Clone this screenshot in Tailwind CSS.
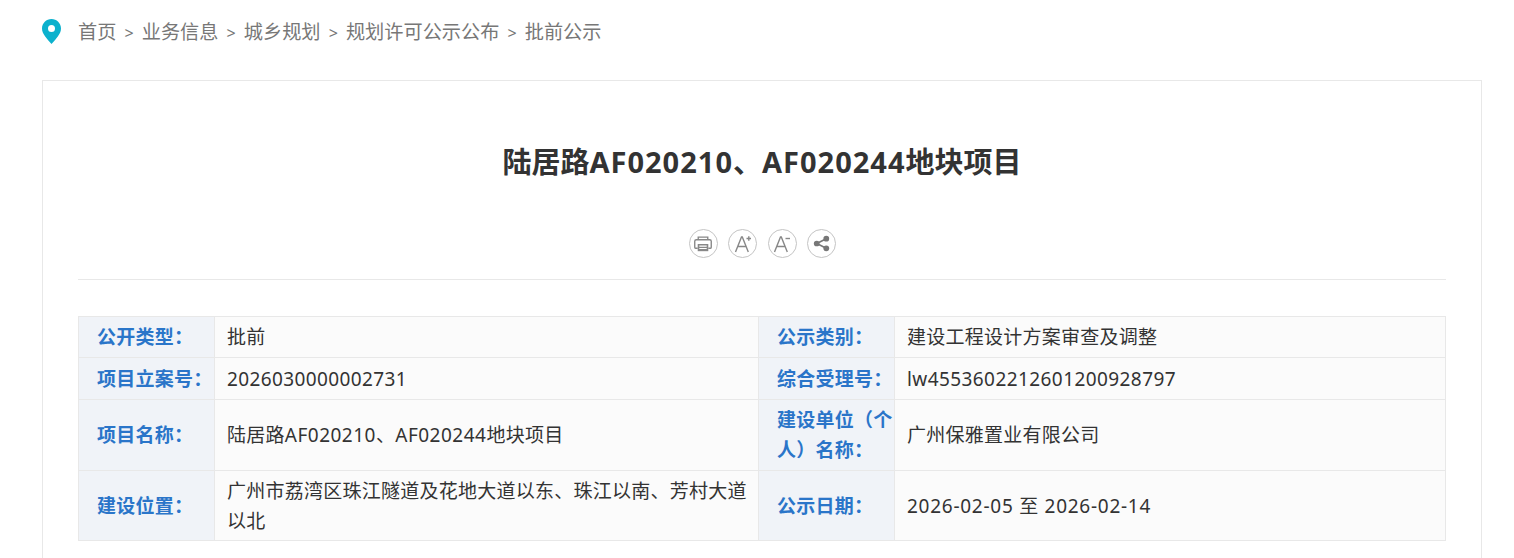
<!DOCTYPE html>
<html lang="zh-CN">
<head>
    <meta charset="UTF-8">
    <title>陆居路AF020210、AF020244地块项目</title>
    <script src="https://cdn.jsdelivr.net/npm/@tailwindcss/browser@4"></script>
</head>
<body class="bg-white h-[558px] overflow-hidden font-['Noto_Sans','Noto_Sans_CJK_SC',sans-serif]">

    <!-- breadcrumb -->
    <div class="flex items-center h-[64px] pl-[42px] pt-[1px] text-[19.2px] text-[#777]">
        <svg class="w-[19px] h-[25px] mr-[17px] -mt-[2px]" viewBox="0 0 19 25">
            <path fill-rule="evenodd" fill="#0cb1cd" d="M9.5 0C4.3 0 0 4.2 0 9.4c0 3 1.4 5.4 3.2 8.1 1.7 2.5 4 5 6.3 7.5 2.3-2.500 4.600-5 6.300-7.500C17.600 14.800 19 12.400 19 9.400 19 4.200 14.700 0 9.500 0zm0 6a3.500 3.500 0 1 1 0 7 3.500 3.500 0 0 1 0-7z"/>
        </svg>
        <span>首页</span>
        <span class="mx-[8.1px] text-[16px]">&gt;</span>
        <span>业务信息</span>
        <span class="mx-[8.1px] text-[16px]">&gt;</span>
        <span>城乡规划</span>
        <span class="mx-[8.1px] text-[16px]">&gt;</span>
        <span>规划许可公示公布</span>
        <span class="mx-[8.1px] text-[16px]">&gt;</span>
        <span>批前公示</span>
    </div>

    <!-- card -->
    <div class="mx-[42px] mt-[16px] w-[1440px] h-[478px] border border-b-0 border-[#e8e8e8] px-[35px]">
        <h1 class="pt-[59px] text-center text-[29px] leading-[44px] font-bold text-[#333]">陆居路<span class="tracking-[1px]">AF020210</span>、<span class="tracking-[1px]">AF020244</span>地块项目</h1>

        <div class="flex justify-center gap-[10.5px] mt-[45px] pl-[1px] h-[51px] border-b border-[#e8e8e8]">
            <button class="w-[29px] h-[29px] rounded-full border-[1.5px] border-[#c4c4c4] flex items-center justify-center">
                <svg class="w-[18px] h-[16px]" viewBox="0 0 17 15" fill="none" stroke="#888">
                    <path d="M4 3V1h9v2" stroke-width="1.300"/>
                    <path d="M3.500 11.500H1.500A1 1 0 0 1 .7 10.500V5a1.500 1.500 0 0 1 1.500-1.500h12.600A1.500 1.500 0 0 1 16.300 5v5.500a1 1 0 0 1-.8 1h-2" stroke-width="1.300"/>
                    <path d="M3.500 7.500h10v6.800h-10z" fill="#888" stroke="none"/>
                    <path d="M5 9.500h7M5 11.800h7" stroke="#fff"/>
                </svg>
            </button>
            <button class="w-[29px] h-[29px] rounded-full border-[1.5px] border-[#c4c4c4] flex items-center justify-center">
                <svg class="w-[20px] h-[20px]" viewBox="0 0 20 20" fill="none" stroke="#888">
                    <path d="M2.500 18 8.500 3h.8l6 15M5 12.500h8" stroke-width="1.400"/>
                    <path d="M13.500 4.500h4.500M15.800 2.200v4.600" stroke-width="1.400"/>
                </svg>
            </button>
            <button class="w-[29px] h-[29px] rounded-full border-[1.5px] border-[#c4c4c4] flex items-center justify-center">
                <svg class="w-[20px] h-[20px]" viewBox="0 0 20 20" fill="none" stroke="#888">
                    <path d="M2.500 18 8.500 3h.8l6 15M5 12.500h8" stroke-width="1.400"/>
                    <path d="M13.500 4.500h4.500" stroke-width="1.400"/>
                </svg>
            </button>
            <button class="w-[29px] h-[29px] rounded-full border-[1.5px] border-[#c4c4c4] flex items-center justify-center">
                <svg class="w-[17px] h-[17px]" viewBox="0 0 16 16" fill="#777" stroke="#777">
                    <path d="M12.500 3.500 3.500 8l9 4.500" fill="none" stroke-width="1.500"/>
                    <circle cx="12.500" cy="3.500" r="2.700" stroke="none"/>
                    <circle cx="3.500" cy="8" r="2.700" stroke="none"/>
                    <circle cx="12.500" cy="12.500" r="2.700" stroke="none"/>
                </svg>
            </button>
        </div>

        <!-- info table -->
        <table class="mt-[36px] w-[1367px] table-fixed border-collapse text-[19px] leading-[30px] tracking-[0.25px] text-[#333]">
            <colgroup>
                <col class="w-[136px]">
                <col class="w-[544px]">
                <col class="w-[136px]">
                <col class="w-[551px]">
            </colgroup>
            <tbody>
                <tr class="h-[41px]">
                    <th class="border border-[#e8e8e8] bg-[#f0f3f8] pl-[18px] pr-0 text-left font-bold text-[#2a75c9]">公开类型：</th>
                    <td class="border border-[#e8e8e8] bg-[#fbfbfb] pl-[12px] pr-[10px]">批前</td>
                    <th class="border border-[#e8e8e8] bg-[#f0f3f8] pl-[18px] pr-0 text-left font-bold text-[#2a75c9]">公示类别：</th>
                    <td class="border border-[#e8e8e8] bg-[#fbfbfb] pl-[12px] pr-[10px]">建设工程设计方案审查及调整</td>
                </tr>
                <tr class="h-[42px]">
                    <th class="border border-[#e8e8e8] bg-[#f0f3f8] pl-[18px] pr-0 text-left font-bold text-[#2a75c9]">项目立案号：</th>
                    <td class="border border-[#e8e8e8] bg-[#fbfbfb] pl-[12px] pr-[10px] tracking-[0.38px]">2026030000002731</td>
                    <th class="border border-[#e8e8e8] bg-[#f0f3f8] pl-[18px] pr-0 text-left font-bold text-[#2a75c9]">综合受理号：</th>
                    <td class="border border-[#e8e8e8] bg-[#fbfbfb] pl-[12px] pr-[10px] tracking-[0.42px]">lw4553602212601200928797</td>
                </tr>
                <tr class="h-[71px]">
                    <th class="border border-[#e8e8e8] bg-[#f0f3f8] pl-[18px] pr-0 text-left font-bold text-[#2a75c9]">项目名称：</th>
                    <td class="border border-[#e8e8e8] bg-[#fbfbfb] pl-[12px] pr-[10px]">陆居路<span class="tracking-[0.5px]">AF020210</span>、<span class="tracking-[0.5px]">AF020244</span>地块项目</td>
                    <th class="border border-[#e8e8e8] bg-[#f0f3f8] pl-[18px] pr-0 text-left font-bold text-[#2a75c9]">建设单位（个人）名称：</th>
                    <td class="border border-[#e8e8e8] bg-[#fbfbfb] pl-[12px] pr-[10px]">广州保雅置业有限公司</td>
                </tr>
                <tr class="h-[70px]">
                    <th class="border border-[#e8e8e8] bg-[#f0f3f8] pl-[18px] pr-0 text-left font-bold text-[#2a75c9]">建设位置：</th>
                    <td class="border border-[#e8e8e8] bg-[#fbfbfb] pl-[12px] pr-[10px]">广州市荔湾区珠江隧道及花地大道以东、珠江以南、芳村大道以北</td>
                    <th class="border border-[#e8e8e8] bg-[#f0f3f8] pl-[18px] pr-0 text-left font-bold text-[#2a75c9]">公示日期：</th>
                    <td class="border border-[#e8e8e8] bg-[#fbfbfb] pl-[12px] pr-[10px] tracking-[0.73px]">2026-02-05 至 2026-02-14</td>
                </tr>
            </tbody>
        </table>
    </div>

</body>
</html>
